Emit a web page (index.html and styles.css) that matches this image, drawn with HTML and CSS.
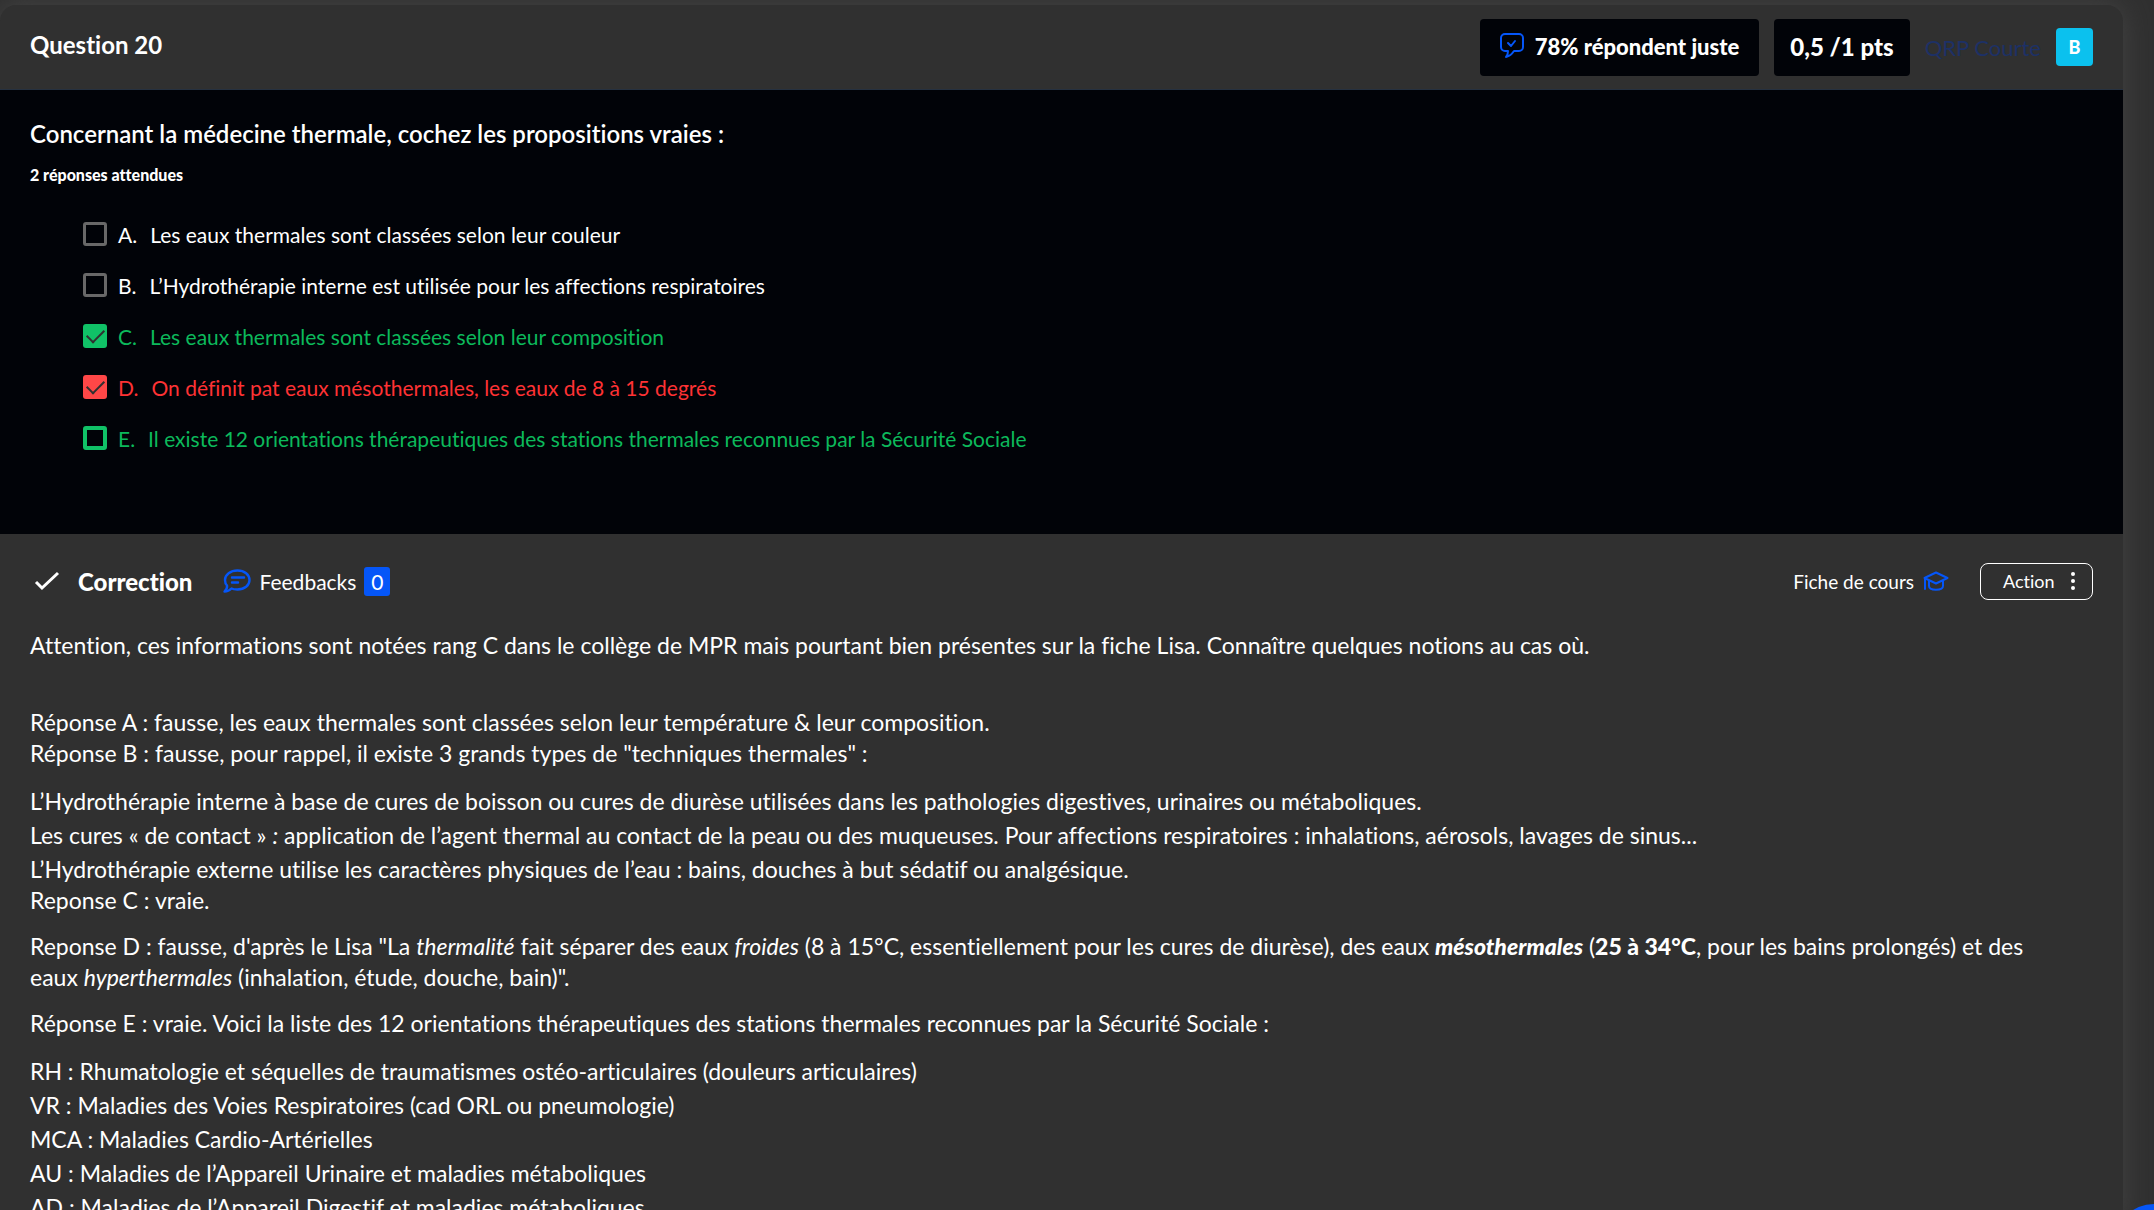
FILE: index.html
```html
<!DOCTYPE html>
<html lang="fr">
<head>
<meta charset="utf-8">
<title>Question 20</title>
<link rel="stylesheet" href="styles.css">
</head>
<body>
<main class="card">
  <header class="card-header">
    <h1 class="title">Question 20</h1>
    <div class="stats">
      <div class="stat">
        <svg class="stat-icon" viewBox="0 0 24 26" fill="none" stroke="#0556f8" stroke-width="2" stroke-linecap="round" stroke-linejoin="round" aria-hidden="true"><path d="M5 1h14a4 4 0 0 1 4 4v9a4 4 0 0 1-4 4h-5c-2 3-4 5-8 6 2-2 2-4 2-6H5a4 4 0 0 1-4-4V5a4 4 0 0 1 4-4z"/><path d="M8 10l3 3 4-5"/></svg>
        <span>78% répondent juste</span>
      </div>
      <div class="stat stat-points">0,5 /1 pts</div>
      <span class="kind">QRP Courte</span>
      <span class="rank">B</span>
    </div>
  </header>

  <section class="question">
    <h2 class="statement">Concernant la médecine thermale, cochez les propositions vraies :</h2>
    <p class="expected">2 réponses attendues</p>
    <div class="choices">
      <label class="choice"><input class="box" type="checkbox"><span class="letter">A.</span><span>Les eaux thermales sont classées selon leur couleur</span></label>
      <label class="choice"><input class="box" type="checkbox"><span class="letter">B.</span><span>L’Hydrothérapie interne est utilisée pour les affections respiratoires</span></label>
      <label class="choice right"><input class="box" type="checkbox" checked><span class="letter">C.</span><span>Les eaux thermales sont classées selon leur composition</span></label>
      <label class="choice wrong"><input class="box" type="checkbox" checked><span class="letter">D.</span><span>On définit pat eaux mésothermales, les eaux de 8 à 15 degrés</span></label>
      <label class="choice right"><input class="box" type="checkbox"><span class="letter">E.</span><span>Il existe 12 orientations thérapeutiques des stations thermales reconnues par la Sécurité Sociale</span></label>
    </div>
  </section>

  <section class="correction">
    <div class="toolbar">
      <svg class="tick" viewBox="0 0 26 20" fill="none" stroke="#fff" stroke-width="3" aria-hidden="true"><path d="M2 11l6 6L24 2"/></svg>
      <h2 class="toolbar-title">Correction</h2>
      <a class="feedbacks" href="#feedbacks">
        <svg class="bubble" viewBox="0 0 28 24" fill="none" stroke="#0556f8" stroke-width="2.4" stroke-linecap="round" stroke-linejoin="round" aria-hidden="true"><path d="M14.500 1.500c7 0 12 4 12 9.500s-5 9.500-12 9.500c-2 0-4 0-6-1-2 2-4 3-7 3 2-2 3-4 2.500-6C2.500 15 2 13 2 11c0-5.500 5.500-9.500 12.500-9.500z"/><path d="M9 8.500h12M9 13.500h6"/></svg>
        <span>Feedbacks</span><span class="count">0</span>
      </a>
      <a class="sheet" href="#fiche">Fiche de cours
        <svg class="cap" viewBox="0 0 26 20" fill="none" stroke="#0556f8" stroke-width="2" stroke-linejoin="round" stroke-linecap="round" aria-hidden="true"><path d="M1.500 7L13 1.500 24.500 7 13 12.500zM6 9.500V15c0 5 14 5 14 0V9.500M2 8v10"/></svg>
      </a>
      <button class="action" type="button">Action
        <svg class="dots" viewBox="0 0 4 18" fill="#fff" aria-hidden="true"><circle cx="2" cy="2" r="2"/><circle cx="2" cy="9" r="2"/><circle cx="2" cy="16" r="2"/></svg>
      </button>
    </div>
    <div class="text">
      <p class="lead">Attention, ces informations sont notées rang C dans le collège de MPR mais pourtant bien présentes sur la fiche Lisa. Connaître quelques notions au cas où.</p>
      <p>Réponse A : fausse, les eaux thermales sont classées selon leur température &amp; leur composition.<br>Réponse B : fausse, pour rappel, il existe 3 grands types de "techniques thermales" :</p>
      <ul class="lines">
        <li>L’Hydrothérapie interne à base de cures de boisson ou cures de diurèse utilisées dans les pathologies digestives, urinaires ou métaboliques.</li>
        <li>Les cures « de contact » <em>:</em> application de l’agent thermal au contact de la peau ou des muqueuses. Pour affections respiratoires : inhalations, aérosols, lavages de sinus...</li>
        <li>L’Hydrothérapie externe utilise les caractères physiques de l’eau : bains, douches à but sédatif ou analgésique.</li>
      </ul>
      <p>Reponse C : vraie.</p>
      <p>Reponse D : fausse, d'après le Lisa "La <em>thermalité</em> fait séparer des eaux <em>froides</em> (8 à 15°C, essentiellement pour les cures de diurèse), des eaux <strong><em>mésothermales</em></strong> (<strong>25 à 34°C</strong>, pour les bains prolongés) et des eaux&nbsp;<em>hyperthermales</em> (inhalation, étude, douche, bain)".</p>
      <p>Réponse E : vraie. Voici la liste des 12 orientations thérapeutiques des stations thermales reconnues par la Sécurité Sociale :</p>
      <ul class="lines">
        <li>RH : Rhumatologie et séquelles de traumatismes ostéo-articulaires (douleurs articulaires)</li>
        <li>VR : Maladies des Voies Respiratoires (cad ORL ou pneumologie)</li>
        <li>MCA : Maladies Cardio-Artérielles</li>
        <li>AU : Maladies de l’Appareil Urinaire et maladies métaboliques</li>
        <li>AD : Maladies de l’Appareil Digestif et maladies métaboliques</li>
      </ul>
    </div>
  </section>
</main>
<button class="chat" type="button" aria-label="Aide"></button>
</body>
</html>
```
FILE: styles.css
```css
* { box-sizing: border-box; }
body {
  margin: 0;
  height: 100vh;
  overflow: hidden;
  padding: 5px 31px 0 0;
  background: #303030;
  color: #fff;
  font: 23px/31px Lato, "Noto Sans", sans-serif;
  font-variant-ligatures: none;
}
h1, h2, p, ul { margin: 0; padding: 0; font-weight: inherit; font-size: inherit; }
a { color: inherit; text-decoration: none; }
svg { flex: none; }
strong { font-weight: 900; }
.card { border-radius: 16px 16px 0 0; background: #303030; box-shadow: 0 0 28px #454545; }
.card-header {
  display: flex;
  align-items: center;
  justify-content: space-between;
  height: 85px;
  padding: 0 30px;
  border-bottom: 1px solid #263140;
}
.title { padding-bottom: 5px; font-size: 24px; font-weight: 700; }
.stats { display: flex; align-items: center; gap: 15px; }
.stat {
  display: flex;
  align-items: center;
  gap: 11px;
  height: 57px;
  padding: 0 20px 2px;
  border-radius: 4px;
  background: #010308;
  font-size: 22px;
  font-weight: 900;
}
.stat-points { padding: 0 16px 2px; font-size: 24px; }
.stat-icon { width: 24px; height: 26px; }
.kind { color: #1d3066; font-size: 22px; }
.rank { width: 37px; border-radius: 4px; background: #0bc1ee; font-size: 18px; font-weight: 900; line-height: 38px; text-align: center; }

.question { height: 444px; padding: 28px 30px 0; background: #010308; }
.statement { font-size: 24px; font-weight: 600; }
.expected { margin-top: 12px; font-size: 16px; font-weight: 900; line-height: 28px; }
.choices { display: grid; row-gap: 17px; padding: 29px 0 0 53px; font-size: 21px; line-height: 34px; }
.choice { display: flex; align-items: center; }
.letter { margin: 0 13px 0 11px; }
.box {
  appearance: none;
  width: 24px;
  height: 24px;
  margin: 0 0 2px;
  border: 3px solid #686868;
  border-radius: 3px;
}
.right { color: #0cb95b; }
.wrong { color: #fe3234; }
.right .box { border: 4px solid #10c267; }
.choice .box:checked { display: grid; place-items: center; border: 0; background: #10c267; }
.wrong .box:checked { background: #ff4747; }
.box:checked::after {
  content: "";
  width: 15px;
  height: 8px;
  margin-bottom: 5px;
  border: solid #303030;
  border-width: 0 0 2px 2px;
  rotate: -45deg;
}

.correction { padding: 28px 30px 0; }
.toolbar { display: flex; align-items: center; height: 38px; font-size: 21px; }
.tick { width: 26px; height: 20px; margin: 0 18px 0 4px; }
.toolbar-title { font-size: 24px; font-weight: 900; }
.feedbacks { display: flex; align-items: center; gap: 8px; margin-left: 31px; }
.bubble { width: 28px; height: 24px; }
.count { width: 26px; border-radius: 3px; background: #0556f8; line-height: 29px; text-align: center; }
.sheet { display: flex; align-items: center; gap: 9px; margin: 0 31px 0 auto; font-size: 19px; }
.cap { width: 26px; height: 20px; }
.action {
  display: flex;
  align-items: center;
  justify-content: space-between;
  width: 113px;
  height: 37px;
  padding: 0 17px 0 22px;
  border: 1px solid #fff;
  border-radius: 8px;
  background: none;
  color: inherit;
  font: inherit;
  font-size: 18px;
}
.dots { width: 4px; height: 18px; }
.text { display: flex; flex-direction: column; gap: 15px; padding-top: 30px; }
.lead { margin-bottom: 31px; }
.lines { list-style: none; line-height: 34px; }
.lines + p { margin-top: -16px; }
.chat { position: fixed; right: -40px; bottom: -74px; width: 80px; height: 80px; border: 0; border-radius: 50%; background: #0556f8; }
```
